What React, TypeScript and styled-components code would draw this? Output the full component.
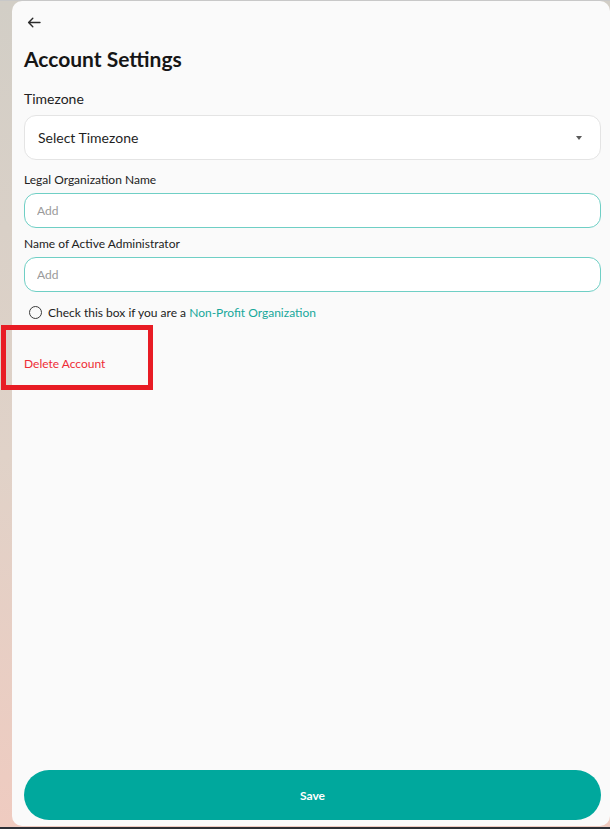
import React from 'react';
import styled, { createGlobalStyle } from 'styled-components';

const GlobalStyle = createGlobalStyle`
  html, body {
    margin: 0;
    padding: 0;
  }
  body {
    font-family: Lato, 'Noto Sans', sans-serif;
    color: #1f1f1f;
  }
  * {
    box-sizing: border-box;
  }
`;

const Screen = styled.div`
  position: relative;
  width: 610px;
  height: 829px;
  display: flex;
  flex-direction: column;
  padding-bottom: 1px;
  background: linear-gradient(180deg, #d2cec6 0%, #e0d2c8 55%, #efcbc0 100%);
  border-top: 1px solid #c8c8c8;
  border-bottom: 2px solid #2b2f36;
`;

const Panel = styled.main`
  flex: 1;
  margin-left: 12px;
  display: flex;
  flex-direction: column;
  padding: 13px 9px 6px 12px;
  background: #fafafa;
  border-radius: 10px;
`;

const BackButton = styled.button`
  align-self: flex-start;
  width: 20px;
  height: 16px;
  padding: 0 0 0 3px;
  border: none;
  background: none;
  display: flex;
  align-items: center;
  color: #2a2a2a;
  cursor: pointer;
`;

const Title = styled.h1`
  margin: 16px 0 0;
  font-size: 21px;
  line-height: 26px;
  font-weight: 700;
  color: #161616;
`;

const SectionLabel = styled.label`
  display: block;
  margin: 18px 0 7px;
  font-size: 14px;
  line-height: 18px;
  color: #222;
`;

const FieldLabel = styled.label<{ $gap: number }>`
  display: block;
  margin: ${(p) => p.$gap}px 0 5px;
  font-size: 12px;
  line-height: 16px;
  color: #222;
`;

const Select = styled.div`
  height: 45px;
  display: flex;
  align-items: center;
  justify-content: space-between;
  padding: 0 18px 0 13px;
  background: #fff;
  border: 1px solid #e4e4e4;
  border-radius: 12px;
  font-size: 14px;
  color: #1f1f1f;
`;

const Caret = styled.span`
  width: 0;
  height: 0;
  border-left: 3.5px solid transparent;
  border-right: 3.5px solid transparent;
  border-top: 4px solid #5a5a5a;
`;

const Input = styled.input`
  width: 100%;
  height: 35px;
  padding: 0 12px;
  background: #fff;
  border: 1.5px solid #6fcfc5;
  border-radius: 12px;
  font-family: inherit;
  font-size: 12px;
  color: #222;
  outline: none;
  &::placeholder {
    color: #9a9a9a;
  }
`;

const CheckRow = styled.label`
  display: flex;
  align-items: center;
  gap: 6px;
  margin: 12px 0 0 5px;
  height: 16px;
  font-size: 12px;
  color: #222;
`;

const Circle = styled.span`
  width: 13px;
  height: 13px;
  border: 1.6px solid #3a3a3a;
  border-radius: 50%;
  flex-shrink: 0;
`;

const Link = styled.a`
  color: #17a89b;
  text-decoration: none;
`;

const DangerLink = styled.button`
  align-self: flex-start;
  margin-top: 36px;
  padding: 0;
  border: none;
  background: none;
  font-family: inherit;
  font-size: 12px;
  line-height: 16px;
  color: #ee2c36;
  cursor: pointer;
`;

const SaveButton = styled.button`
  margin-top: auto;
  height: 50px;
  width: 100%;
  border: none;
  border-radius: 25px;
  background: #00a89d;
  color: #fff;
  font-family: inherit;
  font-size: 12px;
  font-weight: 700;
  cursor: pointer;
`;

const Highlight = styled.div`
  position: absolute;
  left: 1px;
  top: 324px;
  width: 152px;
  height: 65px;
  border: 5px solid #e81c24;
  pointer-events: none;
`;

const App: React.FC = () => {
  return (
    <>
      <GlobalStyle />
      <Screen>
        <Panel>
          <BackButton aria-label="Back">
            <svg width="14" height="11" viewBox="0 0 14 11" fill="none">
              <path
                d="M13 5.5H1.8M5.8 1.3 1.6 5.5l4.2 4.2"
                stroke="currentColor"
                strokeWidth="1.4"
                strokeLinecap="round"
                strokeLinejoin="round"
              />
            </svg>
          </BackButton>
          <Title>Account Settings</Title>

          <SectionLabel>Timezone</SectionLabel>
          <Select>
            <span>Select Timezone</span>
            <Caret />
          </Select>

          <FieldLabel $gap={12}>Legal Organization Name</FieldLabel>
          <Input placeholder="Add" />

          <FieldLabel $gap={8}>Name of Active Administrator</FieldLabel>
          <Input placeholder="Add" />

          <CheckRow>
            <Circle />
            <span>
              Check this box if you are a <Link href="#">Non-Profit Organization</Link>
            </span>
          </CheckRow>

          <DangerLink>Delete Account</DangerLink>

          <SaveButton>Save</SaveButton>
        </Panel>
        <Highlight />
      </Screen>
    </>
  );
};

export default App;
